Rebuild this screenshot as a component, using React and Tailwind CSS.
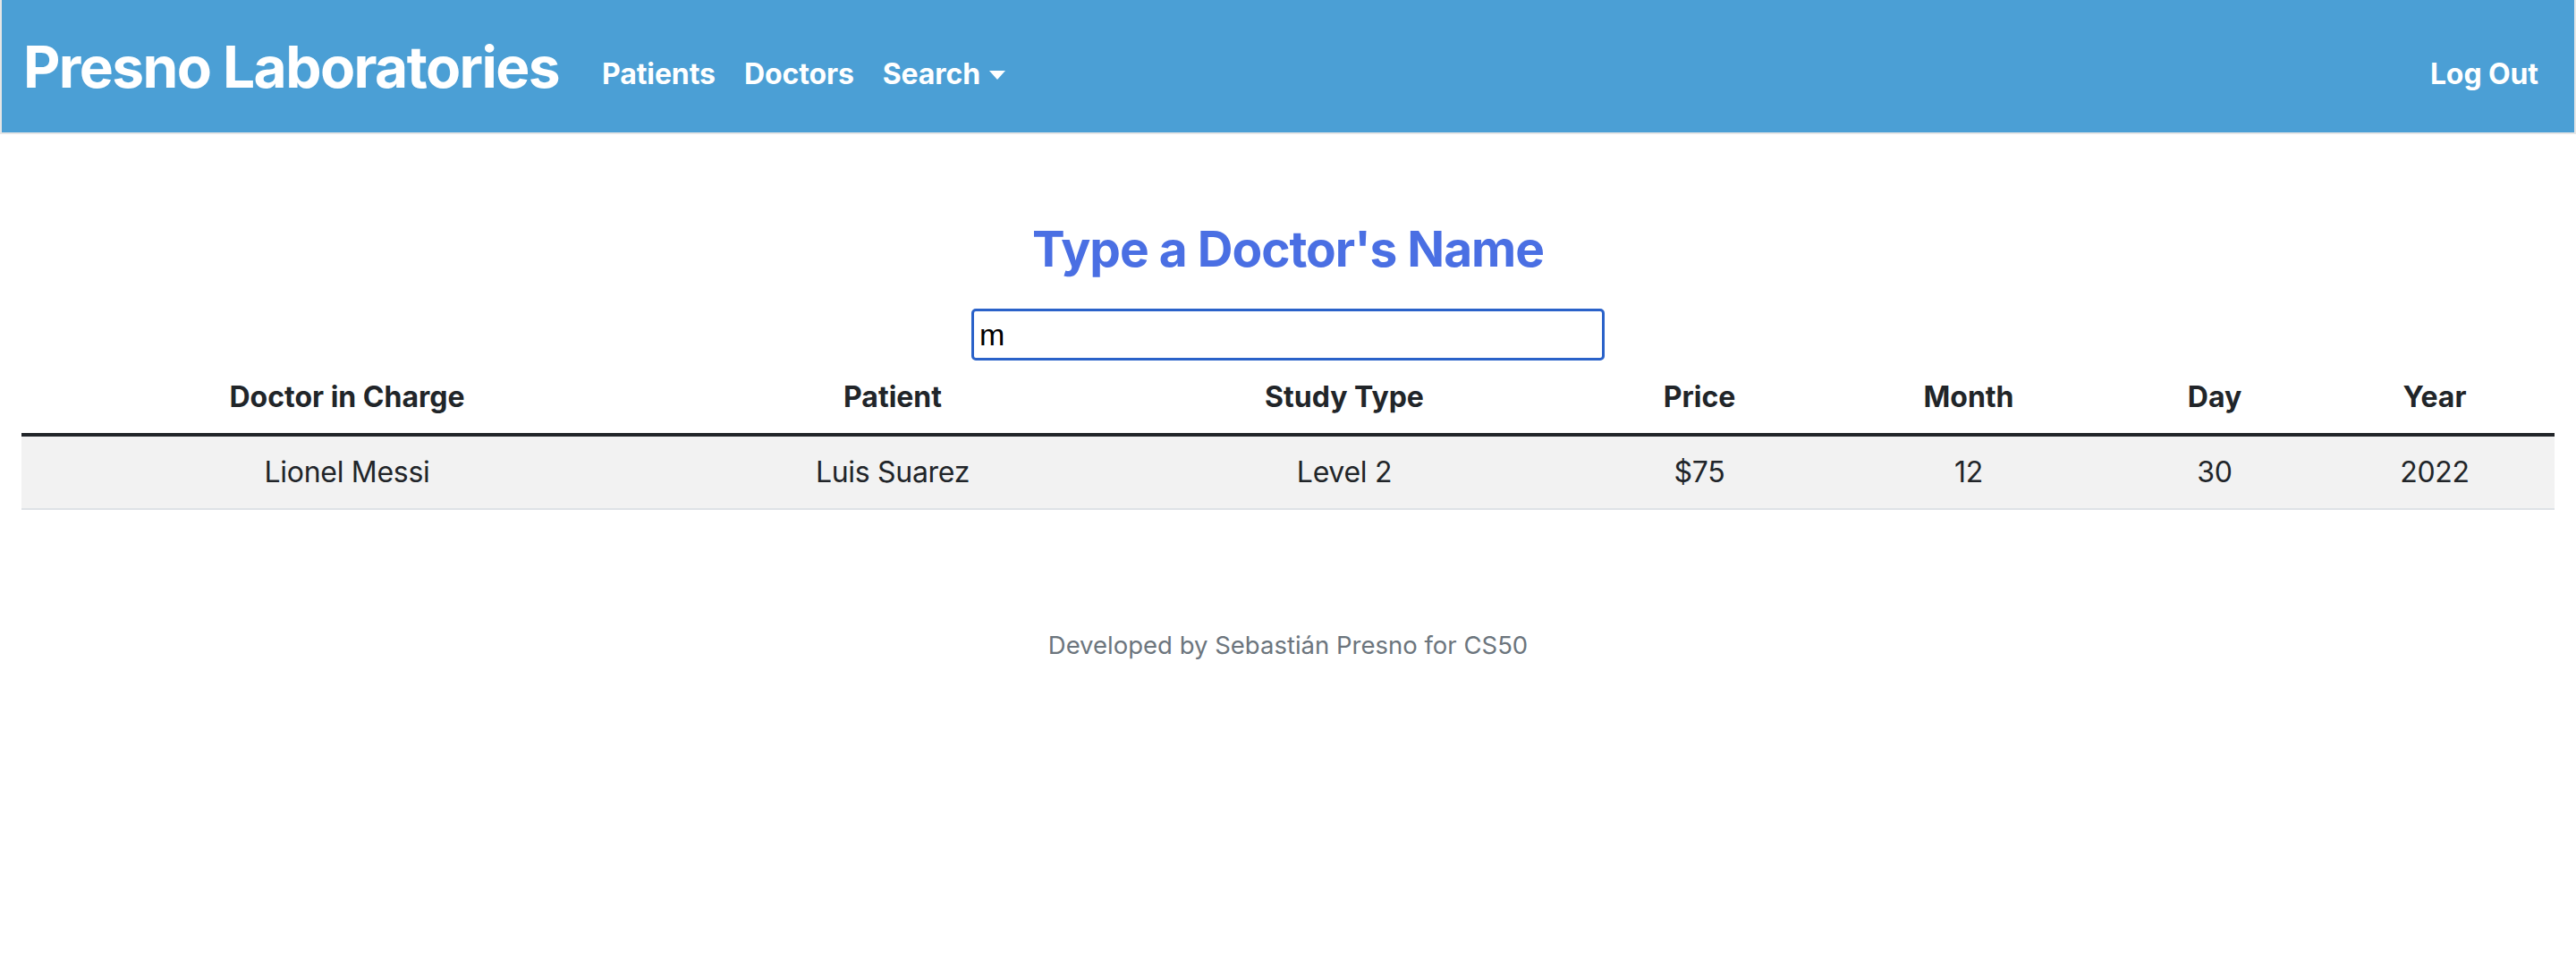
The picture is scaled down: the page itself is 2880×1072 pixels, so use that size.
import React, { useState } from 'react';

const rows = [
    { doctor: 'Lionel Messi', patient: 'Luis Suarez', study: 'Level 2', price: '$75', month: '12', day: '30', year: '2022' },
];

const App = () => {
    const [query, setQuery] = useState('m');

    return (
        <div className="min-h-screen bg-white font-['Inter','Noto_Sans',sans-serif] text-[#212529]">
            {/* Navbar */}
            <nav className="h-[150px] bg-[#4b9fd5] border-x-2 border-b-2 border-[#e6e6e6] px-6 flex items-center justify-between text-white">
                <div className="flex items-center">
                    <a href="#" className="text-[64px] font-bold leading-none tracking-[-1.6px] mr-8 pt-[1px]">
                        Presno Laboratories
                    </a>
                    <ul className="flex items-center text-[32px] font-bold tracking-[-0.1px] pt-[17px]">
                        <li><a href="#" className="px-4">Patients</a></li>
                        <li><a href="#" className="px-4">Doctors</a></li>
                        <li>
                            <a href="#" className="px-4 flex items-center">
                                Search
                                <span className="ml-[10px] mt-[2px] w-0 h-0 border-l-[9px] border-r-[9px] border-t-[10px] border-l-transparent border-r-transparent border-t-white"></span>
                            </a>
                        </li>
                    </ul>
                </div>
                <a href="#" className="px-4 text-[32px] font-bold tracking-[-0.1px] pt-[17px]">Log Out</a>
            </nav>

            {/* Search */}
            <main className="px-6 pt-[95px]">
                <h2 className="text-center text-[55px] leading-[67px] font-bold tracking-[-1px] text-[#4a6fe3] mb-[33px]">
                    Type a Doctor's Name
                </h2>
                <input
                    type="text"
                    value={query}
                    onChange={(e) => setQuery(e.target.value)}
                    className="block mx-auto w-[708px] h-[58px] border-[3px] border-[#2a62c9] rounded-[5px] px-[6px] text-[34px] text-black font-['Liberation_Sans',Arial,sans-serif] outline-none"
                />

                <table className="w-full table-fixed border-collapse mt-px text-[32px] leading-[48px] text-center">
                    <thead>
                        <tr className="border-b-4 border-[#212529]">
                            <th className="w-[728px] py-4 px-4 font-bold">Doctor in Charge</th>
                            <th className="w-[492px] py-4 px-4 font-bold">Patient</th>
                            <th className="w-[518px] py-4 px-4 font-bold">Study Type</th>
                            <th className="w-[276px] py-4 px-4 font-bold">Price</th>
                            <th className="w-[326px] py-4 px-4 font-bold">Month</th>
                            <th className="w-[224px] py-4 px-4 font-bold">Day</th>
                            <th className="w-[268px] py-4 px-4 font-bold">Year</th>
                        </tr>
                    </thead>
                    <tbody>
                        {rows.map((r, i) => (
                            <tr key={i} className="bg-[#f2f2f2] border-b-2 border-[#dee2e6] tracking-[-0.3px]">
                                <td className="py-4 px-4">{r.doctor}</td>
                                <td className="py-4 px-4">{r.patient}</td>
                                <td className="py-4 px-4">{r.study}</td>
                                <td className="py-4 px-4">{r.price}</td>
                                <td className="py-4 px-4">{r.month}</td>
                                <td className="py-4 px-4">{r.day}</td>
                                <td className="py-4 px-4">{r.year}</td>
                            </tr>
                        ))}
                    </tbody>
                </table>
            </main>

            {/* Footer */}
            <footer className="pt-[127px] text-center text-[27.5px] leading-[48px] text-[#6c757d]">
                <p>Developed by Sebastián Presno for CS50</p>
            </footer>
        </div>
    );
};

export default App;
